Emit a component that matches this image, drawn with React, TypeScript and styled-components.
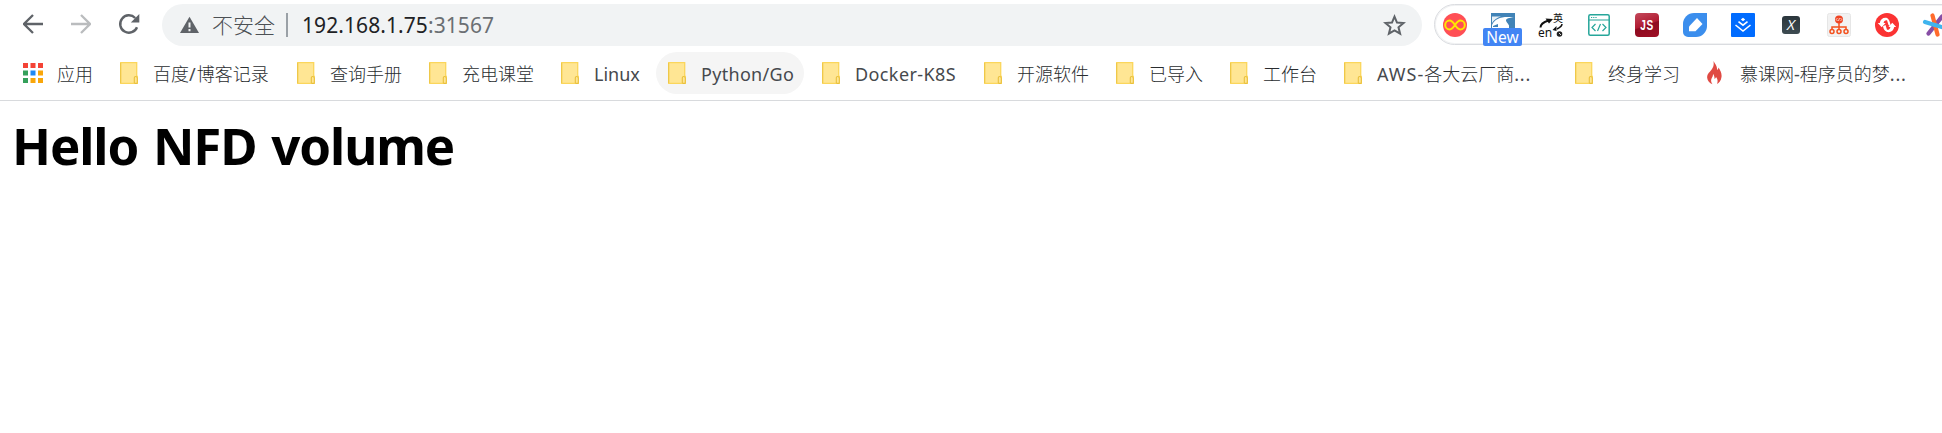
import React from 'react';
import styled, { createGlobalStyle } from 'styled-components';

const GlobalStyle = createGlobalStyle`
  * { box-sizing: border-box; }
  body {
    margin: 0;
    background: #fff;
    overflow: hidden;
    font-family: "Noto Sans", "Noto Sans CJK SC", sans-serif;
  }
  svg { display: block; flex: none; }
`;

const Browser = styled.div`
  width: 1942px;
  overflow: hidden;
`;

const Toolbar = styled.header`
  display: flex;
  align-items: flex-start;
  height: 50px;
  padding: 4px 0 0 9px;
`;

const NavButton = styled.div`
  display: flex;
  flex: none;
  align-items: center;
  justify-content: center;
  width: 48px;
  height: 40px;
`;

const AddressBar = styled.div`
  display: flex;
  flex: none;
  align-items: center;
  width: 1260px;
  height: 42px;
  margin-left: 9px;
  padding: 0 16px 0 18px;
  border-radius: 21px;
  background: #f1f3f4;
`;

const Security = styled.span`
  width: 74px;
  margin: -2px 0 0 13px;
  font-family: "Noto Sans CJK SC", sans-serif;
  font-size: 21px;
  font-weight: 300;
  line-height: 30px;
  color: #4c5054;
  white-space: nowrap;
`;

const Divider = styled.span`
  width: 2px;
  height: 24px;
  margin-right: 14px;
  background: #9aa0a6;
`;

const Url = styled.span`
  flex: 1;
  font-size: 21px;
  line-height: 30px;
  letter-spacing: 0.08px;
  color: #202124;
  white-space: nowrap;
`;

const Port = styled.span`
  color: #6b6f73;
`;

const Extensions = styled.div`
  display: flex;
  flex: none;
  gap: 8px;
  width: 560px;
  height: 41px;
  margin-left: 12px;
  border: 1px solid #dadce0;
  border-radius: 21px;
  box-shadow: inset 0 0 0 1px #f1f2f3;
`;

const Extension = styled.div`
  position: relative;
  display: flex;
  flex: none;
  align-items: center;
  justify-content: center;
  width: 40px;
  height: 40px;
`;

const Badge = styled.span`
  position: absolute;
  left: 0;
  top: 23px;
  width: 39px;
  height: 18px;
  border-radius: 2px;
  background: #4285f4;
  color: #fff;
  font-size: 15.5px;
  line-height: 18px;
  text-align: center;
`;

const Bookmarks = styled.nav`
  display: flex;
  align-items: flex-start;
  gap: 6px;
  height: 51px;
  padding: 2px 0 0 11px;
  border-bottom: 1px solid #d8dadd;
`;

const Bookmark = styled.div<{ $width: number; $active?: boolean }>`
  display: flex;
  flex: none;
  align-items: center;
  width: ${p => p.$width}px;
  height: 42px;
  padding-left: 12px;
  border-radius: 21px;
  background: ${p => (p.$active ? '#f5f5f5' : 'transparent')};
`;

const Label = styled.span<{ $spacing?: number }>`
  margin-top: 1px;
  font-size: 18px;
  line-height: 26px;
  letter-spacing: ${p => p.$spacing ?? 0}px;
  color: #46494d;
  white-space: nowrap;
`;

const Han = styled.span`
  font-family: "Noto Sans CJK SC", sans-serif;
  font-weight: 300;
  letter-spacing: 0;
  color: #2a2d30;
`;

const Dots = styled.span`
  letter-spacing: 0.8px;
`;

const IconSlot = styled.span<{ $width?: number }>`
  flex: none;
  width: ${p => p.$width ?? 33}px;
`;

const Heading = styled.h1`
  margin: 0;
  padding: 10px 0 0 12px;
  font-size: 51px;
  font-weight: 700;
  line-height: 68px;
  letter-spacing: -1.1px;
  word-spacing: 2.6px;
  color: #000;
  white-space: nowrap;
`;

const Arrow = ({ color, flip }: { color: string; flip?: boolean }) => (
  <svg width="20" height="20" viewBox="0 0 20 20" fill="none" stroke={color} strokeWidth="2.3">
    <path d={flip ? 'M0 10H18.5M10 1l9 9-9 9' : 'M20 10H1.5M10 1l-9 9 9 9'} />
  </svg>
);

const Reload = () => (
  <svg width="22" height="22" viewBox="0 0 22 22">
    <path d="M19 14.2A8.7 8.7 0 1 1 17.2 5" fill="none" stroke="#5f6368" strokeWidth="2.4" />
    <path d="M21.3 1v8.5h-8.5z" fill="#5f6368" />
  </svg>
);

const Warning = () => (
  <svg width="19" height="18" viewBox="0 0 19 18">
    <path d="M9.5 .8 19 17H0z" fill="#5f6368" />
    <path d="M9.5 6.5v5M9.5 13v2.2" stroke="#f1f3f4" strokeWidth="2" />
  </svg>
);

const Star = () => (
  <svg width="23" height="22" viewBox="0 0 23 22">
    <path d="M11.5 2.6 14 8.6l6.5.5-5 4.2 1.6 6.4-5.6-3.4-5.6 3.4 1.6-6.4-5-4.2 6.5-.5z" fill="none" stroke="#5f6368" strokeWidth="2" />
  </svg>
);

const Apps = () => {
  const colors = ['#f44336', '#f44336', '#f44336', '#34a05a', '#1e88f5', '#f9a60a', '#34a05a', '#f9a60a', '#f9a60a'];
  return (
    <svg width="20" height="20" viewBox="0 0 20 20">
      {colors.map((c, i) => (
        <rect key={i} x={(i % 3) * 7.5} y={Math.floor(i / 3) * 7.5} width="5" height="5" fill={c} />
      ))}
    </svg>
  );
};

const Folder = () => (
  <svg width="18" height="22" viewBox="0 0 18 22">
    <path d="M.7.7h16v13.8h.6v6.8H.7z" fill="#ffe694" stroke="#fbd65b" strokeWidth="1.3" />
    <path d="M.6 1v20" stroke="#eec84a" strokeWidth="1.1" />
    <path d="M14.3 21v-5.2q0-1.3 1.3-1.3t1.7 1.3v4.6q0 1-1 1h-2" fill="#ffe694" stroke="#e9c03c" strokeWidth="1.1" />
  </svg>
);

const Flame = () => (
  <svg width="15" height="24" viewBox="0 0 15 24">
    <path d="M6.5 0c2 3.5 4 5.5 3.500 9 1-.5 1.300-1.500 1.500-2.500 2 3 3.500 6 3 9.500-.4 3.400-2.500 6-4.500 7 1-2.500 .8-5-1-7-.3 1-.7 1.500-1.500 2C7.500 15.500 7 14 6 13c.3 3-2.500 4.500-1.800 7.500.2 1 .7 1.800 1.300 2.800C2.500 22 .5 20 .2 17 -.3 13 3 11 5 8 7 5 6.800 3 6.500 0z" fill="#e04a43" />
  </svg>
);

const Infinity = () => (
  <svg width="24" height="24" viewBox="0 0 24 24">
    <circle cx="12" cy="12" r="12" fill="#ff4f55" />
    <path d="M12 12C9.500 8.300 8.500 7.600 6.600 7.600a4.400 4.400 0 0 0 0 8.800c1.900 0 2.900-.7 5.400-4.400s3.500-4.400 5.400-4.400a4.400 4.400 0 0 1 0 8.800c-1.900 0-2.900-.7-5.400-4.400z" fill="none" stroke="#ffe600" strokeWidth="2" />
  </svg>
);

const Swoosh = () => (
  <svg width="24" height="24" viewBox="0 0 24 24">
    <rect width="24" height="24" fill="#4183b7" />
    <path d="M1 3.500H10C6 4.500 3 7 1 10z" fill="#e8f0f6" />
    <path d="M1 12C4 5.500 11 3 23 4.500c-5 0-8 1-8 3 0 1.500 2 2.500 3 5V15H1z" fill="#fff" />
    <path d="m2 13 5-2v3H2zM18 12c2-.5 4-2 5-4v7h-5z" fill="#4183b7" />
  </svg>
);

const TranslateBox = styled.div`
  position: relative;
  width: 24px;
  height: 24px;
  color: #111;
  line-height: 1;
`;
const TranslateHan = styled.span`
  position: absolute;
  left: 14px;
  top: 0;
  font-family: "Noto Sans CJK SC", sans-serif;
  font-size: 10px;
`;
const TranslateLatin = styled.span`
  position: absolute;
  left: -1px;
  top: 14px;
  font-size: 12px;
`;

const Translate = () => (
  <TranslateBox>
    <svg width="24" height="24" viewBox="0 0 24 24">
      <path d="M1.500 14.500q0-4.500 8-7" fill="none" stroke="#111" strokeWidth="2" />
      <path d="M6.500 5.500 14 6l-4 4.500z" fill="#111" />
      <path d="M23 11q0 2.500-5 5" fill="none" stroke="#111" strokeWidth="1.500" />
      <path d="M17.500 13v5l-4-1z" fill="#111" />
      <circle cx="20.500" cy="21" r="2.800" fill="#222" />
      <path d="m20 20 2 2" stroke="#ddd" />
    </svg>
    <TranslateHan>英</TranslateHan>
    <TranslateLatin>en</TranslateLatin>
  </TranslateBox>
);

const CodeWindow = () => (
  <svg width="22" height="22" viewBox="0 0 22 22" fill="none" stroke="#26a69a" strokeWidth="1.500">
    <rect x=".8" y=".8" width="20.400" height="20.400" rx="1.500" />
    <path d="M1 6h20M3 3.500h1.200m1 0h1.200m1 0h1.200M7.500 10 4 13.500 7.500 17M14.500 10l3.500 3.500-3.500 3.500M12.500 10l-3 7" strokeWidth="1.200" />
  </svg>
);

const JsTile = styled.div`
  width: 24px;
  height: 24px;
  border-radius: 4px;
  background: linear-gradient(160deg, #c44a5c 0%, #b01b32 48%, #8e0b20 52%, #a00f26 100%);
`;
const JsText = styled.div`
  transform: scaleX(0.72);
  color: #fff;
  font-family: "Liberation Sans", sans-serif;
  font-size: 14px;
  font-weight: 700;
  line-height: 25px;
  letter-spacing: 0.8px;
  text-align: center;
`;

const Tag = () => (
  <svg width="24" height="24" viewBox="0 0 24 24">
    <path d="M11 0h13v13a11 11 0 0 1-11 11H5a5 5 0 0 1-5-5V11A11 11 0 0 1 11 0z" fill="#3b8eed" />
    <path d="M6 18.300V13.500L14 5l5.500 6-7 7.300z" fill="#fff" />
  </svg>
);

const Diamonds = () => (
  <svg width="24" height="24" viewBox="0 0 24 24">
    <rect width="24" height="24" rx="1" fill="#006cff" />
    <path d="m12 4.800 2.200 1.700L12 8.200 9.800 6.500z" fill="#fff" />
    <path d="m7.500 8.700 4.500 3.500 4.500-3.500M4.500 12l7.500 6 7.500-6" fill="none" stroke="#fff" strokeWidth="1.600" />
  </svg>
);

const XTile = styled.div`
  width: 18px;
  height: 18px;
  border-radius: 3px;
  background: linear-gradient(#2b363c, #3e4c52);
  color: #fff;
  font-family: "Open Sans", sans-serif;
  font-size: 15px;
  font-style: italic;
  line-height: 17px;
  text-align: center;
`;

const Tree = () => (
  <svg width="24" height="24" viewBox="0 0 24 24">
    <rect x=".5" y=".5" width="23" height="23" rx="2" fill="#f2f2f2" stroke="#e6e6e6" />
    <path d="M12 9v9M5 18v-4h14v4" fill="none" stroke="#f4511e" strokeWidth="1.500" />
    <circle cx="12" cy="6.500" r="4" fill="#ef4423" />
    <path d="m10.500 5-1.300 1.500L10.500 8m3-3 1.300 1.500L13.500 8m-1-3-1 3" fill="none" stroke="#fff" strokeWidth=".7" />
    <g fill="#f2f2f2" stroke="#f4511e" strokeWidth="1.500">
      <circle cx="5" cy="18.500" r="2" /><circle cx="12" cy="18.500" r="2" /><circle cx="19" cy="18.500" r="2" />
    </g>
  </svg>
);

const Sync = () => (
  <svg width="24" height="24" viewBox="0 0 24 24">
    <circle cx="12" cy="12" r="12" fill="#fb3333" />
    <path d="M12 5C8 4.300 5.300 6.500 4.800 10H2.800L6.700 14.300 10.600 10H8.600C9 8 10 7 12 7.200L13.500 12 16 13.800C15 10.500 15 7 12 5z" fill="#fff" />
    <path d="M12 19c4 .7 6.700-1.500 7.200-5h2L17.300 9.700 13.400 14h2c-.4 2-1.400 3-3.400 2.800L10.500 12 8 13.200C8.500 15.500 9 17.500 12 19z" fill="#fff" />
  </svg>
);

const Pinwheel = () => (
  <svg width="26" height="24" viewBox="0 0 26 24" strokeWidth="4.200" strokeLinecap="round">
    <path d="m20 3.500-13.500 17" stroke="#874ea5" />
    <path d="m10.500 2.500 5 19" stroke="#ff6b2c" />
    <path d="m3 9 20 6" stroke="#3fb4ee" />
  </svg>
);

type Item = { width: number; latin?: string; han?: string; slash?: boolean; tail?: string; clipped?: boolean; spacing?: number; active?: boolean };

const folders: Item[] = [
  { width: 171, han: '百度', slash: true, tail: '博客记录', spacing: 1 },
  { width: 126, han: '查询手册' },
  { width: 126, han: '充电课堂' },
  { width: 101, latin: 'Linux' },
  { width: 148, latin: 'Python/Go', active: true, spacing: 0.3 },
  { width: 156, latin: 'Docker-K8S', spacing: 0.4 },
  { width: 126, han: '开源软件' },
  { width: 108, han: '已导入' },
  { width: 108, han: '工作台' },
  { width: 225, latin: 'AWS-', han: '各大云厂商', clipped: true, spacing: 1 },
  { width: 126, han: '终身学习' },
];

export default function App() {
  return (
    <Browser>
      <GlobalStyle />
      <Toolbar>
        <NavButton><Arrow color="#5f6368" /></NavButton>
        <NavButton><Arrow color="#babcbe" flip /></NavButton>
        <NavButton><Reload /></NavButton>
        <AddressBar>
          <Warning />
          <Security>不安全</Security>
          <Divider />
          <Url>192.168.1.75<Port>:31567</Port></Url>
          <Star />
        </AddressBar>
        <Extensions>
          <Extension><Infinity /></Extension>
          <Extension><Swoosh /><Badge>New</Badge></Extension>
          <Extension><Translate /></Extension>
          <Extension><CodeWindow /></Extension>
          <Extension><JsTile><JsText>JS</JsText></JsTile></Extension>
          <Extension><Tag /></Extension>
          <Extension><Diamonds /></Extension>
          <Extension><XTile>X</XTile></Extension>
          <Extension><Tree /></Extension>
          <Extension><Sync /></Extension>
          <Extension><Pinwheel /></Extension>
        </Extensions>
      </Toolbar>
      <Bookmarks>
        <Bookmark $width={91}>
          <IconSlot $width={34}><Apps /></IconSlot>
          <Label><Han>应用</Han></Label>
        </Bookmark>
        {folders.map((f, i) => (
          <Bookmark key={i} $width={f.width} $active={f.active}>
            <IconSlot><Folder /></IconSlot>
            <Label $spacing={f.spacing}>
              {f.latin}
              {f.han && <Han>{f.han}</Han>}
              {f.slash && '/'}
              {f.clipped && <Dots>...</Dots>}
              {f.tail && <Han>{f.tail}</Han>}
            </Label>
          </Bookmark>
        ))}
        <Bookmark $width={240}>
          <IconSlot><Flame /></IconSlot>
          <Label><Han>慕课网</Han>-<Han>程序员的梦</Han><Dots>...</Dots></Label>
        </Bookmark>
      </Bookmarks>
      <Heading>Hello NFD volume</Heading>
    </Browser>
  );
}
